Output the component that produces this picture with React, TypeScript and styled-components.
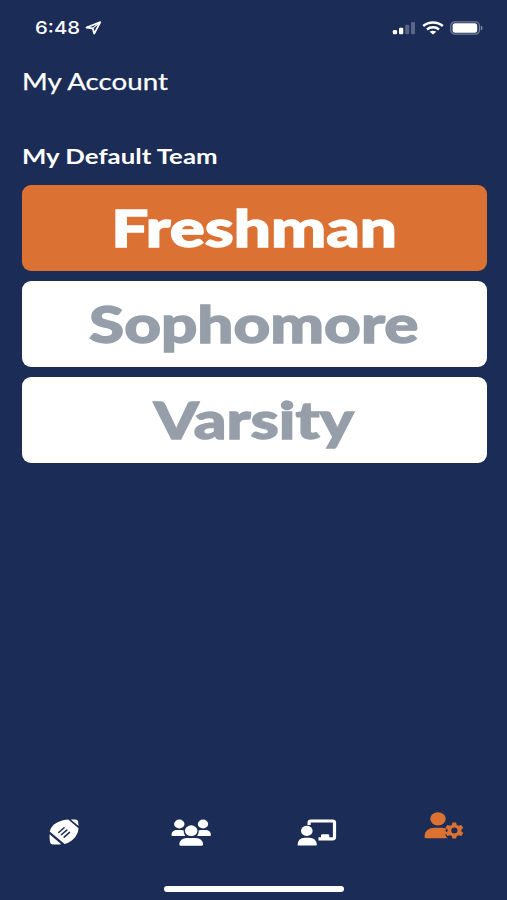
import React, { useState } from "react";
import styled, { createGlobalStyle } from "styled-components";

const colors = {
  navy: "#1b2c56",
  orange: "#dc7134",
  grey: "#969fa9",
  white: "#ffffff",
};

const GlobalStyle = createGlobalStyle`
  * { box-sizing: border-box; }
  body { margin: 0; background: ${colors.navy}; }
`;

const Screen = styled.div`
  display: flex;
  flex-direction: column;
  width: 507px;
  height: 900px;
  overflow: hidden;
  background: ${colors.navy};
  color: ${colors.white};
  font-family: Lato, "Open Sans", sans-serif;
`;

const StatusBar = styled.header`
  display: flex;
  align-items: center;
  justify-content: space-between;
  height: 54px;
  padding: 1px 24px 0 35px;
`;

const StatusGroup = styled.div<{ $gap: number }>`
  display: flex;
  align-items: center;
  gap: ${({ $gap }) => $gap}px;
`;

const Clock = styled.span`
  width: 45px;
  font: 500 17.5px/20px Inter, sans-serif;
  white-space: nowrap;
  transform: scaleX(1.16);
  transform-origin: left;
`;

const Content = styled.main`
  display: flex;
  flex-direction: column;
  flex: 1;
  padding: 12px 20.5px 0 21.5px;
`;

const Title = styled.h1<{ $stretch: number }>`
  align-self: flex-start;
  margin: 0;
  font-size: 23.5px;
  font-weight: 400;
  line-height: 30px;
  white-space: nowrap;
  transform: scaleX(${({ $stretch }) => $stretch});
  transform-origin: left;
  -webkit-text-stroke: 0.25px currentColor;
`;

const Subtitle = styled.h2<{ $stretch: number }>`
  align-self: flex-start;
  margin: 46px 0 14px;
  font-size: 21.5px;
  font-weight: 700;
  line-height: 29px;
  white-space: nowrap;
  transform: scaleX(${({ $stretch }) => $stretch});
  transform-origin: left;
`;

const TeamList = styled.div`
  display: flex;
  flex-direction: column;
  gap: 10.5px;
`;

const TeamButton = styled.button<{ $active: boolean }>`
  display: flex;
  align-items: center;
  justify-content: center;
  height: 85.5px;
  padding: 0;
  border: 0;
  border-radius: 9px;
  background: ${({ $active }) => ($active ? colors.orange : colors.white)};
  color: ${({ $active }) => ($active ? colors.white : colors.grey)};
  font: 900 51px/60px Lato, sans-serif;
  -webkit-text-stroke: 1.3px currentColor;
`;

const TeamName = styled.span<{ $stretch: number }>`
  display: block;
  white-space: nowrap;
  transform: scaleX(${({ $stretch }) => $stretch});
`;

const TabBar = styled.nav`
  display: grid;
  grid-template-columns: repeat(4, 1fr);
  height: 71px;
  padding-left: 1px;
`;

const Tab = styled.button<{ $active?: boolean }>`
  display: flex;
  align-items: center;
  justify-content: center;
  height: ${({ $active }) => ($active ? 20 : 34)}px;
  padding: 0;
  border: 0;
  background: none;
  color: ${({ $active }) => ($active ? colors.orange : colors.white)};
`;

const HomeArea = styled.footer`
  display: flex;
  justify-content: center;
  height: 14px;
`;

const HomeIndicator = styled.div`
  width: 180px;
  height: 5.5px;
  border-radius: 3px;
  background: ${colors.white};
`;

const LocationIcon = () => (
  <svg width="17" height="14" viewBox="0 0 17 14" fill="none" stroke="#fff" strokeWidth="1.8" strokeLinejoin="round">
    <path d="M15.3 1.2 1.5 6.5 7.7 7.3 9.2 12.6Z" />
    <path d="m7.8 7.1 7.2-5.6" strokeWidth="1.1" />
  </svg>
);

const SignalIcon = () => (
  <svg width="24" height="14" viewBox="0 0 24 14" fill="#fff">
    <rect x="0.8" y="9" width="4.3" height="4.3" rx="1.2" />
    <rect x="7" y="6.7" width="4.3" height="6.6" rx="1.2" />
    <rect x="13.2" y="3.7" width="4" height="9.6" rx="1.2" opacity=".28" />
    <rect x="19" y="1" width="4" height="12.3" rx="1.2" opacity=".28" />
  </svg>
);

const WifiIcon = () => (
  <svg width="22" height="14" viewBox="0 0 22 14" fill="none" stroke="#fff" strokeWidth="2.5">
    <path d="M1.2 5C6.7.2 15.3.2 20.8 5" />
    <path d="M5 8.5c3.4-2.9 8.6-2.9 12 0" />
    <path d="M11 13.4 7.7 10.8c1.9-1.5 4.7-1.5 6.6 0Z" fill="#fff" stroke="none" />
  </svg>
);

const BatteryIcon = () => (
  <svg width="33" height="14" viewBox="0 0 33 14">
    <rect x=".8" y=".8" width="28.6" height="12.4" rx="4" fill="none" stroke="#fff" strokeOpacity=".4" strokeWidth="1.2" />
    <rect x="2.6" y="2.3" width="24.6" height="9.4" rx="2.5" fill="#fff" />
    <path d="M30.8 4.6c2.3.7 2.3 4.1 0 4.8Z" fill="#fff" opacity=".45" />
  </svg>
);

const FootballIcon = () => (
  <svg width="30" height="26" viewBox="0 0 30 26" fill="currentColor">
    <path d="M14 1.2Q17 .5 19.2.4L29.5 9.2Q29.4 12 28.4 14.2 27 18.2 22.8 21.5 19.2 24.2 15.6 25L.7 12.4Q1.6 8.8 4.8 5.6 8.8 2.3 14 1.2Z" />
    <path d="M21.8.6H26.2Q28.8.6 29.1 2.6L29.5 7Z" />
    <path d="M.6 15.2 12.3 25.2Q7.2 25.8 3.6 25.4 1.3 25.2 1 23.2.4 19.6.6 15.2Z" />
    <path d="m9.7 13.5 5.4-4.7m-2.7 7 5.4-4.7m-2.7 7 5.4-4.7" stroke={colors.navy} strokeWidth="1.5" strokeLinecap="round" fill="none" />
  </svg>
);

const TeamIcon = () => (
  <svg width="40" height="27" viewBox="0 0 40 27" fill="currentColor">
    <ellipse cx="8.3" cy="5" rx="5.2" ry="4.4" />
    <ellipse cx="32" cy="5" rx="5.2" ry="4.4" />
    <ellipse cx="20.2" cy="11.7" rx="6.3" ry="5.4" />
    <path d="M1.7 17Q.4 17 .5 15.5.9 10.9 6 10.9H10.5Q11.8 10.9 12.7 11.5 12.2 14.7 14.3 17Z" />
    <path d="M38.7 17Q40 17 39.9 15.5 39.5 10.9 34.4 10.9H29.9Q28.6 10.9 27.7 11.5 28.2 14.7 26.1 17Z" />
    <path d="M8.3 25.6Q8.9 19.1 15.7 19.1H24.7Q31.5 19.1 32.1 25.6 32.1 26.7 30.8 26.7H9.6Q8.3 26.7 8.3 25.6Z" />
  </svg>
);

const CoachIcon = () => (
  <svg width="40" height="27" viewBox="0 0 40 27">
    <path d="M12.1 6V3.5Q12.1 2 13.8 2H35.7Q37.5 2 37.5 3.5V18.3Q37.5 19.8 35.7 19.8H21.5" fill="none" stroke="currentColor" strokeWidth="3.2" />
    <path d="M24 20V16.2Q24 15.2 25.2 15.2H31Q32.2 15.2 32.2 16.2V20Z" fill="currentColor" />
    <ellipse cx="9.8" cy="11.9" rx="5.8" ry="5.1" fill="currentColor" />
    <path d="M.6 25.7Q1.1 18.8 7.7 18.8H12.3Q19.2 18.8 19.8 25.7 19.8 26.6 18.6 26.6H1.8Q.6 26.6.6 25.7Z" fill="currentColor" />
  </svg>
);

const AccountIcon = () => (
  <svg width="40" height="27" viewBox="0 0 40 27" fill="currentColor">
    <ellipse cx="14" cy="6.8" rx="7.8" ry="6.6" />
    <path d="M.5 24.7Q.7 15.7 11 15.7H17Q20.2 15.7 22.4 16.7L21.4 19 23.2 20.6 21.3 22.4Q21.8 25.2 24 26.2H2.3Q.5 26.2.5 24.7Z" />
    <path fillRule="evenodd" d="m28.4 10.5 3.6-.1.8 2.5 1.8.9 2.7-.9 2 3-2 1.6v1.8l2 1.7-2 3-2.7-.8-1.8.8-.8 2.5-3.6-.1-.6-2.4-1.8-.8-2.7.8-1.8-3 2.1-1.7v-1.8l-2.1-1.7 1.8-2.9 2.7.9 1.8-.9ZM30.4 15.5a3.1 2.9 0 1 0 0 5.8 3.1 2.9 0 0 0 0-5.8Z" />
  </svg>
);

const teams = [
  { name: "Freshman", stretch: 1.285 },
  { name: "Sophomore", stretch: 1.25 },
  { name: "Varsity", stretch: 1.255 },
];

export default function App() {
  const [selected, setSelected] = useState("Freshman");

  return (
    <>
      <GlobalStyle />
      <Screen>
        <StatusBar>
          <StatusGroup $gap={5}>
            <Clock>6:48</Clock>
            <LocationIcon />
          </StatusGroup>
          <StatusGroup $gap={6}>
            <SignalIcon />
            <WifiIcon />
            <BatteryIcon />
          </StatusGroup>
        </StatusBar>
        <Content>
          <Title $stretch={1.18}>My Account</Title>
          <Subtitle $stretch={1.2}>My Default Team</Subtitle>
          <TeamList>
            {teams.map(({ name, stretch }) => (
              <TeamButton key={name} $active={name === selected} onClick={() => setSelected(name)}>
                <TeamName $stretch={stretch}>{name}</TeamName>
              </TeamButton>
            ))}
          </TeamList>
        </Content>
        <TabBar>
          <Tab aria-label="Games"><FootballIcon /></Tab>
          <Tab aria-label="Teams"><TeamIcon /></Tab>
          <Tab aria-label="Coaching"><CoachIcon /></Tab>
          <Tab aria-label="Account" $active><AccountIcon /></Tab>
        </TabBar>
        <HomeArea><HomeIndicator /></HomeArea>
      </Screen>
    </>
  );
}
